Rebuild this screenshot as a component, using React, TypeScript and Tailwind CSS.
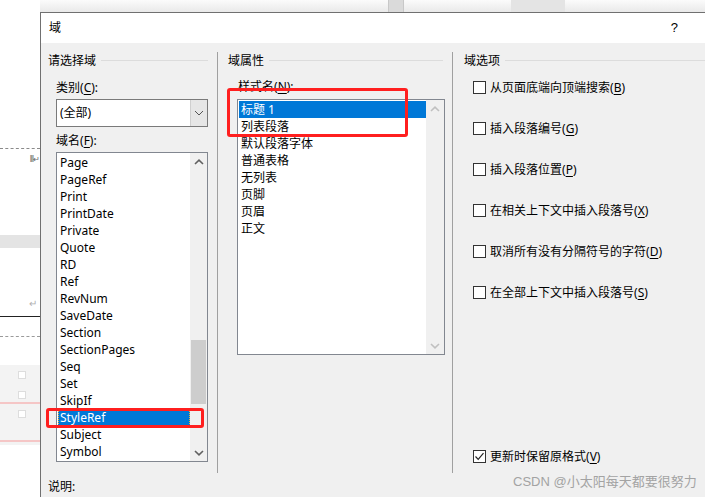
import type { ReactNode } from "react";

const FIELDS = [
  "Page",
  "PageRef",
  "Print",
  "PrintDate",
  "Private",
  "Quote",
  "RD",
  "Ref",
  "RevNum",
  "SaveDate",
  "Section",
  "SectionPages",
  "Seq",
  "Set",
  "SkipIf",
  "StyleRef",
  "Subject",
  "Symbol",
];

const STYLES = ["标题 1", "列表段落", "默认段落字体", "普通表格", "无列表", "页脚", "页眉", "正文"];

const OPTIONS: { label: string; key: string }[] = [
  { label: "从页面底端向顶端搜索", key: "B" },
  { label: "插入段落编号", key: "G" },
  { label: "插入段落位置", key: "P" },
  { label: "在相关上下文中插入段落号", key: "X" },
  { label: "取消所有没有分隔符号的字符", key: "D" },
  { label: "在全部上下文中插入段落号", key: "S" },
];

function Mnemonic({ text, k }: { text: string; k: string }) {
  return (
    <span>
      {text}(<span className="underline underline-offset-2">{k}</span>)
    </span>
  );
}

function Arrow({ dir, color }: { dir: "up" | "down"; color: string }) {
  return (
    <svg width="10" height="6" viewBox="0 0 10 6">
      <polyline
        points={dir === "up" ? "1,5 5,1.2 9,5" : "1,1 5,4.8 9,1"}
        fill="none"
        stroke={color}
        strokeWidth="1.6"
      />
    </svg>
  );
}

function GroupHeading({ title, gapRight }: { title: string; gapRight: string }) {
  return (
    <div className={`flex items-center h-[17px] ${gapRight}`}>
      <span className="leading-[17px]">{title}</span>
      <div className="flex-1 h-px bg-[#dcdcdc] ml-[5px]" />
    </div>
  );
}

function Checkbox({ checked, children }: { checked?: boolean; children: ReactNode }) {
  return (
    <div className="flex items-center h-[17px] gap-[4px]">
      <div className="w-[13px] h-[13px] border border-[#333333] bg-white flex items-center justify-center shrink-0">
        {checked && (
          <svg width="11" height="11" viewBox="0 0 11 11">
            <polyline points="1.5,5.5 4.2,8.3 9.5,2.2" fill="none" stroke="#222" strokeWidth="1.2" />
          </svg>
        )}
      </div>
      <span className="leading-[17px]">{children}</span>
    </div>
  );
}

export default function App() {
  return (
    <div className="relative w-[705px] h-[497px] overflow-hidden flex bg-white text-[12px] text-black font-['Noto_Sans','Noto_Sans_CJK_SC',sans-serif]">
      {/* document behind the dialog */}
      <div className="w-[40px] shrink-0 flex flex-col bg-white">
        <div className="h-[148px]" />
        <div className="h-[21px] border-t border-dashed border-[#8a8a8a] flex items-center justify-end pr-[1px]">
          <span className="text-[8px] leading-none text-[#666] tracking-[-1px]">lll↵</span>
        </div>
        <div className="h-[66px]" />
        <div className="h-[13px] bg-[#e4e4e4]" />
        <div className="h-[60px] flex items-end justify-end pr-[3px]">
          <span className="text-[10px] leading-none text-[#b0b0b0]">↵</span>
        </div>
        <div className="h-[8px]" />
        <div className="h-px bg-[#222]" />
        <div className="h-[19px]" />
        <div className="h-px border-t border-dashed border-[#9a9a9a]" />
        <div className="h-[28px]" />
        <div className="h-[80px] bg-[#f3f3f3] flex flex-col pl-[18px] pt-[6px]">
          <div className="w-[8px] h-[8px] border border-[#dddddd] bg-white" />
          <div className="mt-[12px] w-[8px] h-[8px] border border-[#dddddd] bg-white" />
          <div className="mt-[3px] -ml-[18px] h-[2px] bg-[#f5c6c6]" />
          <div className="mt-[6px] w-[8px] h-[8px] border border-[#dddddd] bg-white" />
          <div className="mt-auto mb-[3px] -ml-[18px] h-[2px] bg-[#f5c6c6]" />
        </div>
      </div>

      <div className="flex-1 flex flex-col">
        {/* ribbon strip above */}
        <div className="h-[12px] flex bg-gradient-to-b from-[#fbfbfb] to-[#e9e9e9]">
          <div className="w-[348px]" />
          <div className="w-[16px] bg-[#dadada] border-x border-[#c8c8c8]" />
          <div className="w-[107px]" />
          <div className="w-[54px] bg-[#e4e4e4]" />
          <div className="flex-1" />
        </div>

        {/* dialog */}
        <div className="flex-1 flex flex-col border-l border-t border-[#707070]">
          <div className="h-[30px] bg-white flex items-center justify-between pl-[8px] pr-[27px]">
            <span>域</span>
            <span className="font-['Liberation_Sans',sans-serif] text-[13px]">?</span>
          </div>

          <div className="flex-1 bg-[#f0f0f0] flex flex-col">
            <div className="mt-[9px] h-[421px] flex">
              {/* 请选择域 */}
              <div className="w-[177px] border-r border-[#a0a0a0] pl-[7px] flex flex-col">
                <GroupHeading title="请选择域" gapRight="mr-[9px]" />
                <div className="ml-[8px] w-[152px] flex flex-col">
                  <div className="mt-[10px] leading-[17px]">
                    <Mnemonic text="类别" k="C" />:
                  </div>
                  <div className="mt-[3px] h-[28px] border border-[#7a7a7a] bg-white flex">
                    <div className="flex-1 pl-[3px] flex items-center">(全部)</div>
                    <div className="w-[17px] bg-[#e6e6e6] border-l border-[#cfcfcf] flex items-center justify-center">
                      <svg width="10" height="6" viewBox="0 0 10 6">
                        <polyline points="1,1 5,5 9,1" fill="none" stroke="#555" strokeWidth="1" />
                      </svg>
                    </div>
                  </div>
                  <div className="mt-[5px] leading-[17px]">
                    <Mnemonic text="域名" k="F" />:
                  </div>
                  <div className="mt-[3px] h-[310px] border border-[#828790] bg-white flex">
                    <div className="flex-1 pt-px pl-px flex flex-col">
                      {FIELDS.map((f) => (
                        <div
                          key={f}
                          className={`h-[17px] leading-[17px] pl-[2px] ${
                            f === "StyleRef"
                              ? "bg-[#0078d7] text-white outline outline-1 outline-dotted outline-[#f2b23a] -outline-offset-1"
                              : ""
                          }`}
                        >
                          {f}
                        </div>
                      ))}
                    </div>
                    <div className="w-[17px] bg-[#f0f0f0] flex flex-col">
                      <div className="h-[17px] flex items-center justify-center">
                        <Arrow dir="up" color="#606060" />
                      </div>
                      <div className="flex-1 flex flex-col">
                        <div className="mt-[170px] h-[64px] mx-px bg-[#cdcdcd]" />
                      </div>
                      <div className="h-[17px] flex items-center justify-center">
                        <Arrow dir="down" color="#606060" />
                      </div>
                    </div>
                  </div>
                </div>
              </div>

              {/* 域属性 */}
              <div className="w-[235px] border-r border-[#a0a0a0] pl-[10px] flex flex-col">
                <GroupHeading title="域属性" gapRight="mr-[9px]" />
                <div className="ml-[9px] w-[208px] flex flex-col">
                  <div className="mt-[9px] leading-[17px] pl-px">
                    <Mnemonic text="样式名" k="N" />:
                  </div>
                  <div className="mt-[4px] h-[256px] border border-[#828790] bg-white flex">
                    <div className="flex-1 pt-px pl-px flex flex-col">
                      {STYLES.map((s, i) => (
                        <div
                          key={s}
                          className={`h-[17px] leading-[17px] pl-[2px] ${i === 0 ? "bg-[#0078d7] text-white" : ""}`}
                        >
                          {s}
                        </div>
                      ))}
                    </div>
                    <div className="w-[18px] bg-[#f0f0f0] flex flex-col justify-between">
                      <div className="h-[17px] flex items-center justify-center">
                        <Arrow dir="up" color="#c0c0c0" />
                      </div>
                      <div className="h-[17px] flex items-center justify-center">
                        <Arrow dir="down" color="#c0c0c0" />
                      </div>
                    </div>
                  </div>
                </div>
              </div>

              {/* 域选项 */}
              <div className="flex-1 pl-[11px] flex flex-col">
                <GroupHeading title="域选项" gapRight="mr-0" />
                <div className="ml-[9px] flex-1 flex flex-col">
                  <div className="mt-[10px] flex flex-col gap-[24px]">
                    {OPTIONS.map((o) => (
                      <Checkbox key={o.key}>
                        <Mnemonic text={o.label} k={o.key} />
                      </Checkbox>
                    ))}
                  </div>
                  <div className="mt-auto mb-[8px]">
                    <Checkbox checked>
                      <Mnemonic text="更新时保留原格式" k="V" />
                    </Checkbox>
                  </div>
                </div>
              </div>
            </div>

            <div className="mt-[5px] pl-[7px] leading-[17px]">说明:</div>
          </div>
        </div>
      </div>

      {/* annotation boxes */}
      <div className="absolute left-[227px] top-[88px] w-[181px] h-[49px] border-[3px] border-[#ff1f1f] rounded-[3px]" />
      <div className="absolute left-[46px] top-[408px] w-[158px] h-[20px] border-[3px] border-[#ff1f1f] rounded-[3px]" />

      {/* watermark */}
      <div className="absolute left-[513px] top-[473px] text-[13px] leading-[17px] text-[#a3a3a3] whitespace-nowrap font-['Liberation_Sans','Noto_Sans_CJK_SC',sans-serif]">
        CSDN @小太阳每天都要很努力
      </div>
    </div>
  );
}
